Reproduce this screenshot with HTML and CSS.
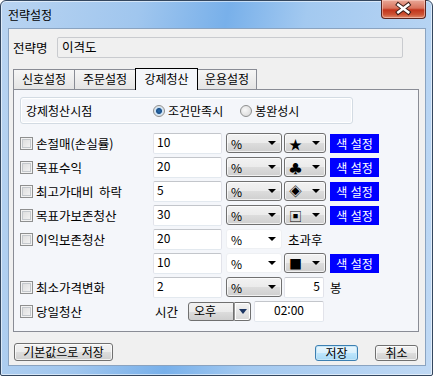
FILE: index.html
```html
<!DOCTYPE html>
<html lang="ko">

<head>
    <meta charset="UTF-8">
    <title>전략설정</title>
    <link rel="stylesheet" href="styles.css">
</head>

<body>
    <div class="window">
        <div class="titlebar">
            <span class="title">전략설정</span>
            <span class="close">
                <svg width="45" height="18" viewBox="0 0 45 18">
                    <path d="M17 4.5 L27.5 12.5 M27.5 4.5 L17 12.5" stroke="#3a1c18" stroke-width="4.6" stroke-linecap="square" />
                    <path d="M17 4.5 L27.5 12.5 M27.5 4.5 L17 12.5" stroke="#fff" stroke-width="2.6" stroke-linecap="square" />
                </svg>
            </span>
        </div>

        <div class="client">
            <div class="name-row">
                <span class="name-label">전략명</span>
                <div class="name-input">이격도</div>
            </div>

            <div class="tabs">
                <span class="tab">신호설정</span>
                <span class="tab">주문설정</span>
                <span class="tab active">강제청산</span>
                <span class="tab last">운용설정</span>
            </div>

            <div class="panel">
                <div class="group">
                    <span class="group-title">강제청산시점</span>
                    <span class="radio"><span class="dot on"></span>조건만족시</span>
                    <span class="radio second"><span class="dot"></span>봉완성시</span>
                </div>

                <div class="row first">
                    <span class="check"><span class="box"></span>손절매(손실률)</span>
                    <span class="field">10</span>
                    <span class="combo unit">%</span>
                    <span class="combo mark">★</span>
                    <span class="color-btn">색 설정</span>
                </div>
                <div class="row">
                    <span class="check"><span class="box"></span>목표수익</span>
                    <span class="field">20</span>
                    <span class="combo unit">%</span>
                    <span class="combo mark">♣</span>
                    <span class="color-btn">색 설정</span>
                </div>
                <div class="row">
                    <span class="check"><span class="box"></span>최고가대비 하락</span>
                    <span class="field">5</span>
                    <span class="combo unit">%</span>
                    <span class="combo mark">◈</span>
                    <span class="color-btn">색 설정</span>
                </div>
                <div class="row">
                    <span class="check"><span class="box"></span>목표가보존청산</span>
                    <span class="field">30</span>
                    <span class="combo unit">%</span>
                    <span class="combo mark">▣</span>
                    <span class="color-btn">색 설정</span>
                </div>
                <div class="row">
                    <span class="check"><span class="box"></span>이익보존청산</span>
                    <span class="field">20</span>
                    <span class="combo unit plain">%</span>
                    <span class="after">초과후</span>
                </div>
                <div class="row">
                    <span class="check"></span>
                    <span class="field">10</span>
                    <span class="combo unit plain">%</span>
                    <span class="combo mark">■</span>
                    <span class="color-btn">색 설정</span>
                </div>
                <div class="row">
                    <span class="check"><span class="box"></span>최소가격변화</span>
                    <span class="field">2</span>
                    <span class="combo unit">%</span>
                    <span class="field count">5</span>
                    <span class="after">봉</span>
                </div>
                <div class="row">
                    <span class="check"><span class="box"></span>당일청산</span>
                    <span class="time-label">시간</span>
                    <span class="ampm">오후</span>
                    <span class="drop"></span>
                    <span class="field clock">02:00</span>
                </div>
            </div>

            <div class="footer">
                <span class="btn wide">기본값으로 저장</span>
                <span class="btn ok">저장</span>
                <span class="btn cancel">취소</span>
            </div>
        </div>
    </div>
</body>

</html>
```

FILE: styles.css
```css
* {
    margin: 0;
    padding: 0;
    box-sizing: border-box;
}

body {
    width: 433px;
    height: 376px;
    overflow: hidden;
    background: #fff;
    font-family: "Noto Sans CJK KR", "Noto Sans", sans-serif;
    font-size: 12px;
    color: #000;
}

.window {
    width: 433px;
    height: 376px;
    border: 1px solid #34475f;
    border-radius: 6px 6px 2px 2px;
    background: linear-gradient(100deg, #b9d4f1 0%, #a0c6ee 28%, #78b0ea 46%, #a3c9f0 62%, #c0d9f4 100%);
    box-shadow: inset 0 0 0 1px rgba(255, 255, 255, 0.55);
    display: flex;
    flex-direction: column;
}

.titlebar {
    height: 27px;
    display: flex;
    justify-content: space-between;
    align-items: flex-start;
    padding-left: 7px;
}

.title {
    line-height: 28px;
}

.close {
    width: 45px;
    height: 19px;
    margin-right: 6px;
    margin-top: -1px;
    border: 1px solid #5a2520;
    border-top: none;
    border-radius: 0 0 4px 4px;
    background: linear-gradient(#e9a898 0%, #d9735d 45%, #c2341c 55%, #cc5234 80%, #e08a6c 100%);
    box-shadow: inset 0 0 0 1px rgba(255, 220, 210, 0.5);
    display: flex;
    align-items: center;
    justify-content: center;
}

.client {
    margin: 0 6px 0 7px;
    height: 338px;
    background: #f0f0f0;
    border: 1px solid #8aa3c0;
}

/* 전략명 */
.name-row {
    display: flex;
    align-items: center;
    margin: 8px 0 0 4px;
    height: 21px;
    font-size: 12.5px;
}

.name-label {
    width: 44px;
}

.name-input {
    width: 346px;
    height: 21px;
    border: 1px solid #c9cbcf;
    border-radius: 2px;
    background: #f0f0f0;
    padding-left: 4px;
    line-height: 18px;
}

/* tabs */
.tabs {
    display: flex;
    align-items: flex-end;
    margin: 9px 0 0 4px;
    height: 22px;
}

.tab {
    width: 61px;
    height: 20px;
    border: 1px solid #898c95;
    border-bottom: none;
    border-right: none;
    background: linear-gradient(#f6f6f6, #e4e4e4);
    text-align: center;
    line-height: 18px;
}

.tab.last {
    width: 59px;
    border-right: 1px solid #898c95;
}

.tab.active {
    width: 63px;
    height: 22px;
    margin-bottom: -1px;
    border: 1px solid #000;
    border-bottom: none;
    background: #f4f6fa;
    position: relative;
    z-index: 1;
    line-height: 20px;
}

.tab.active+.tab {
    border-left: none;
}

.panel {
    margin-left: 4px;
    width: 406px;
    height: 243px;
    border: 1px solid #898c95;
    background: #f4f6fa;
    padding: 7px 0 0 6px;
}

/* 강제청산시점 */
.group {
    width: 333px;
    height: 27px;
    border: 1px solid #d3dbe3;
    border-radius: 3px;
    box-shadow: inset 0 0 0 1px #fff;
    display: flex;
    align-items: center;
    padding-left: 5px;
    margin-bottom: 7px;
}

.group-title {
    width: 127px;
}

.radio {
    display: flex;
    align-items: center;
}

.radio.second {
    margin-left: 17px;
}

.dot {
    width: 12px;
    height: 12px;
    border: 1px solid #8e8f8f;
    border-radius: 50%;
    background: radial-gradient(circle at 40% 40%, #f8f8f8, #d4d4d4);
    margin-right: 3px;
}

.dot.on {
    background: radial-gradient(circle, #2a6fb0 0, #1c4f88 2.5px, #c8e2f7 3.5px, #e8e8e8 5px);
}

/* rows */
.row {
    display: flex;
    align-items: center;
    height: 24px;
}

.check {
    width: 133px;
    display: flex;
    align-items: center;
    font-size: 12.5px;
    word-spacing: 2px;
}

.box {
    width: 13px;
    height: 13px;
    border: 1px solid #8e8f8f;
    background: linear-gradient(135deg, #d9d9d9, #f7f7f7);
    box-shadow: inset 0 0 0 1px #f2f2f2, inset 0 0 0 2px #c4c8cc;
    margin-right: 3px;
}

.field {
    width: 69px;
    height: 21px;
    background: #fff;
    border: 1px solid;
    border-color: #c3c6cb #e2e3ea #e3e9ef #e2e3ea;
    border-radius: 2px;
    padding-left: 3px;
    line-height: 16px;
}

.combo {
    height: 20px;
    display: flex;
    align-items: center;
    border: 1px solid #707070;
    border-radius: 3px;
    background: linear-gradient(#f2f2f2 0%, #ebebeb 50%, #dddddd 50%, #cfcfcf 100%);
    box-shadow: inset 0 0 0 1px rgba(255, 255, 255, 0.7);
    padding: 0 5px 0 4px;
}

.combo::after {
    content: "";
    margin-left: auto;
    border-left: 4px solid transparent;
    border-right: 4px solid transparent;
    border-top: 4px solid #000;
}

.combo.unit {
    width: 56px;
    margin-left: 4px;
}

.combo.plain {
    background: #fff;
    border-color: #eef0f3;
    box-shadow: none;
}

.combo.mark {
    width: 42px;
    margin-left: 2px;
    font-size: 13px;
}

.color-btn {
    width: 49px;
    height: 19px;
    margin-left: 4px;
    background: #0000ff;
    color: #fff;
    text-align: center;
    line-height: 19px;
}

.after {
    margin-left: 6px;
    font-size: 12.5px;
}

.field.count {
    width: 40px;
    margin-left: 2px;
    text-align: right;
    padding-right: 3px;
}

.field.clock {
    width: 70px;
    margin-left: 3px;
    text-align: center;
    padding-left: 0;
}

.time-label {
    width: 33px;
    margin-left: 2px;
    font-size: 12.5px;
}

.ampm {
    width: 46px;
    height: 19px;
    border: 1px solid #707070;
    border-radius: 3px 0 0 3px;
    background: linear-gradient(#f2f2f2 0%, #ebebeb 50%, #dddddd 50%, #cfcfcf 100%);
    padding-left: 5px;
    line-height: 16px;
}

.drop {
    width: 17px;
    height: 19px;
    border: 1px solid #707070;
    border-left: 1px solid #9a9a9a;
    border-radius: 0 3px 3px 0;
    background: linear-gradient(#f4f4f4, #d8d8d8);
    box-shadow: inset 0 0 0 1px #fff;
    display: flex;
    align-items: center;
    justify-content: center;
}

.drop::after {
    content: "";
    border-left: 4px solid transparent;
    border-right: 4px solid transparent;
    border-top: 5px solid #1b3563;
}

/* bottom buttons */
.footer {
    display: flex;
    align-items: flex-end;
    height: 18px;
    margin-top: 11px;
    padding: 0 7px 0 5px;
}

.btn {
    height: 18px;
    border: 1px solid #707070;
    border-radius: 3px;
    background: linear-gradient(#f2f2f2 0%, #ebebeb 50%, #dddddd 50%, #cfcfcf 100%);
    box-shadow: inset 0 0 0 1px rgba(255, 255, 255, 0.7);
    text-align: center;
    line-height: 15px;
}

.btn.wide {
    width: 99px;
}

.btn.ok {
    width: 43px;
    height: 16px;
    margin-left: auto;
    border-color: #3c7fb1;
    background: linear-gradient(#eaf6fd 0%, #d9f0fc 50%, #bee6fd 50%, #a7d9f5 100%);
    box-shadow: inset 0 0 0 1px #c5e6f8;
    line-height: 13px;
}

.btn.cancel {
    width: 43px;
    height: 16px;
    margin-left: 17px;
    line-height: 13px;
}
```
